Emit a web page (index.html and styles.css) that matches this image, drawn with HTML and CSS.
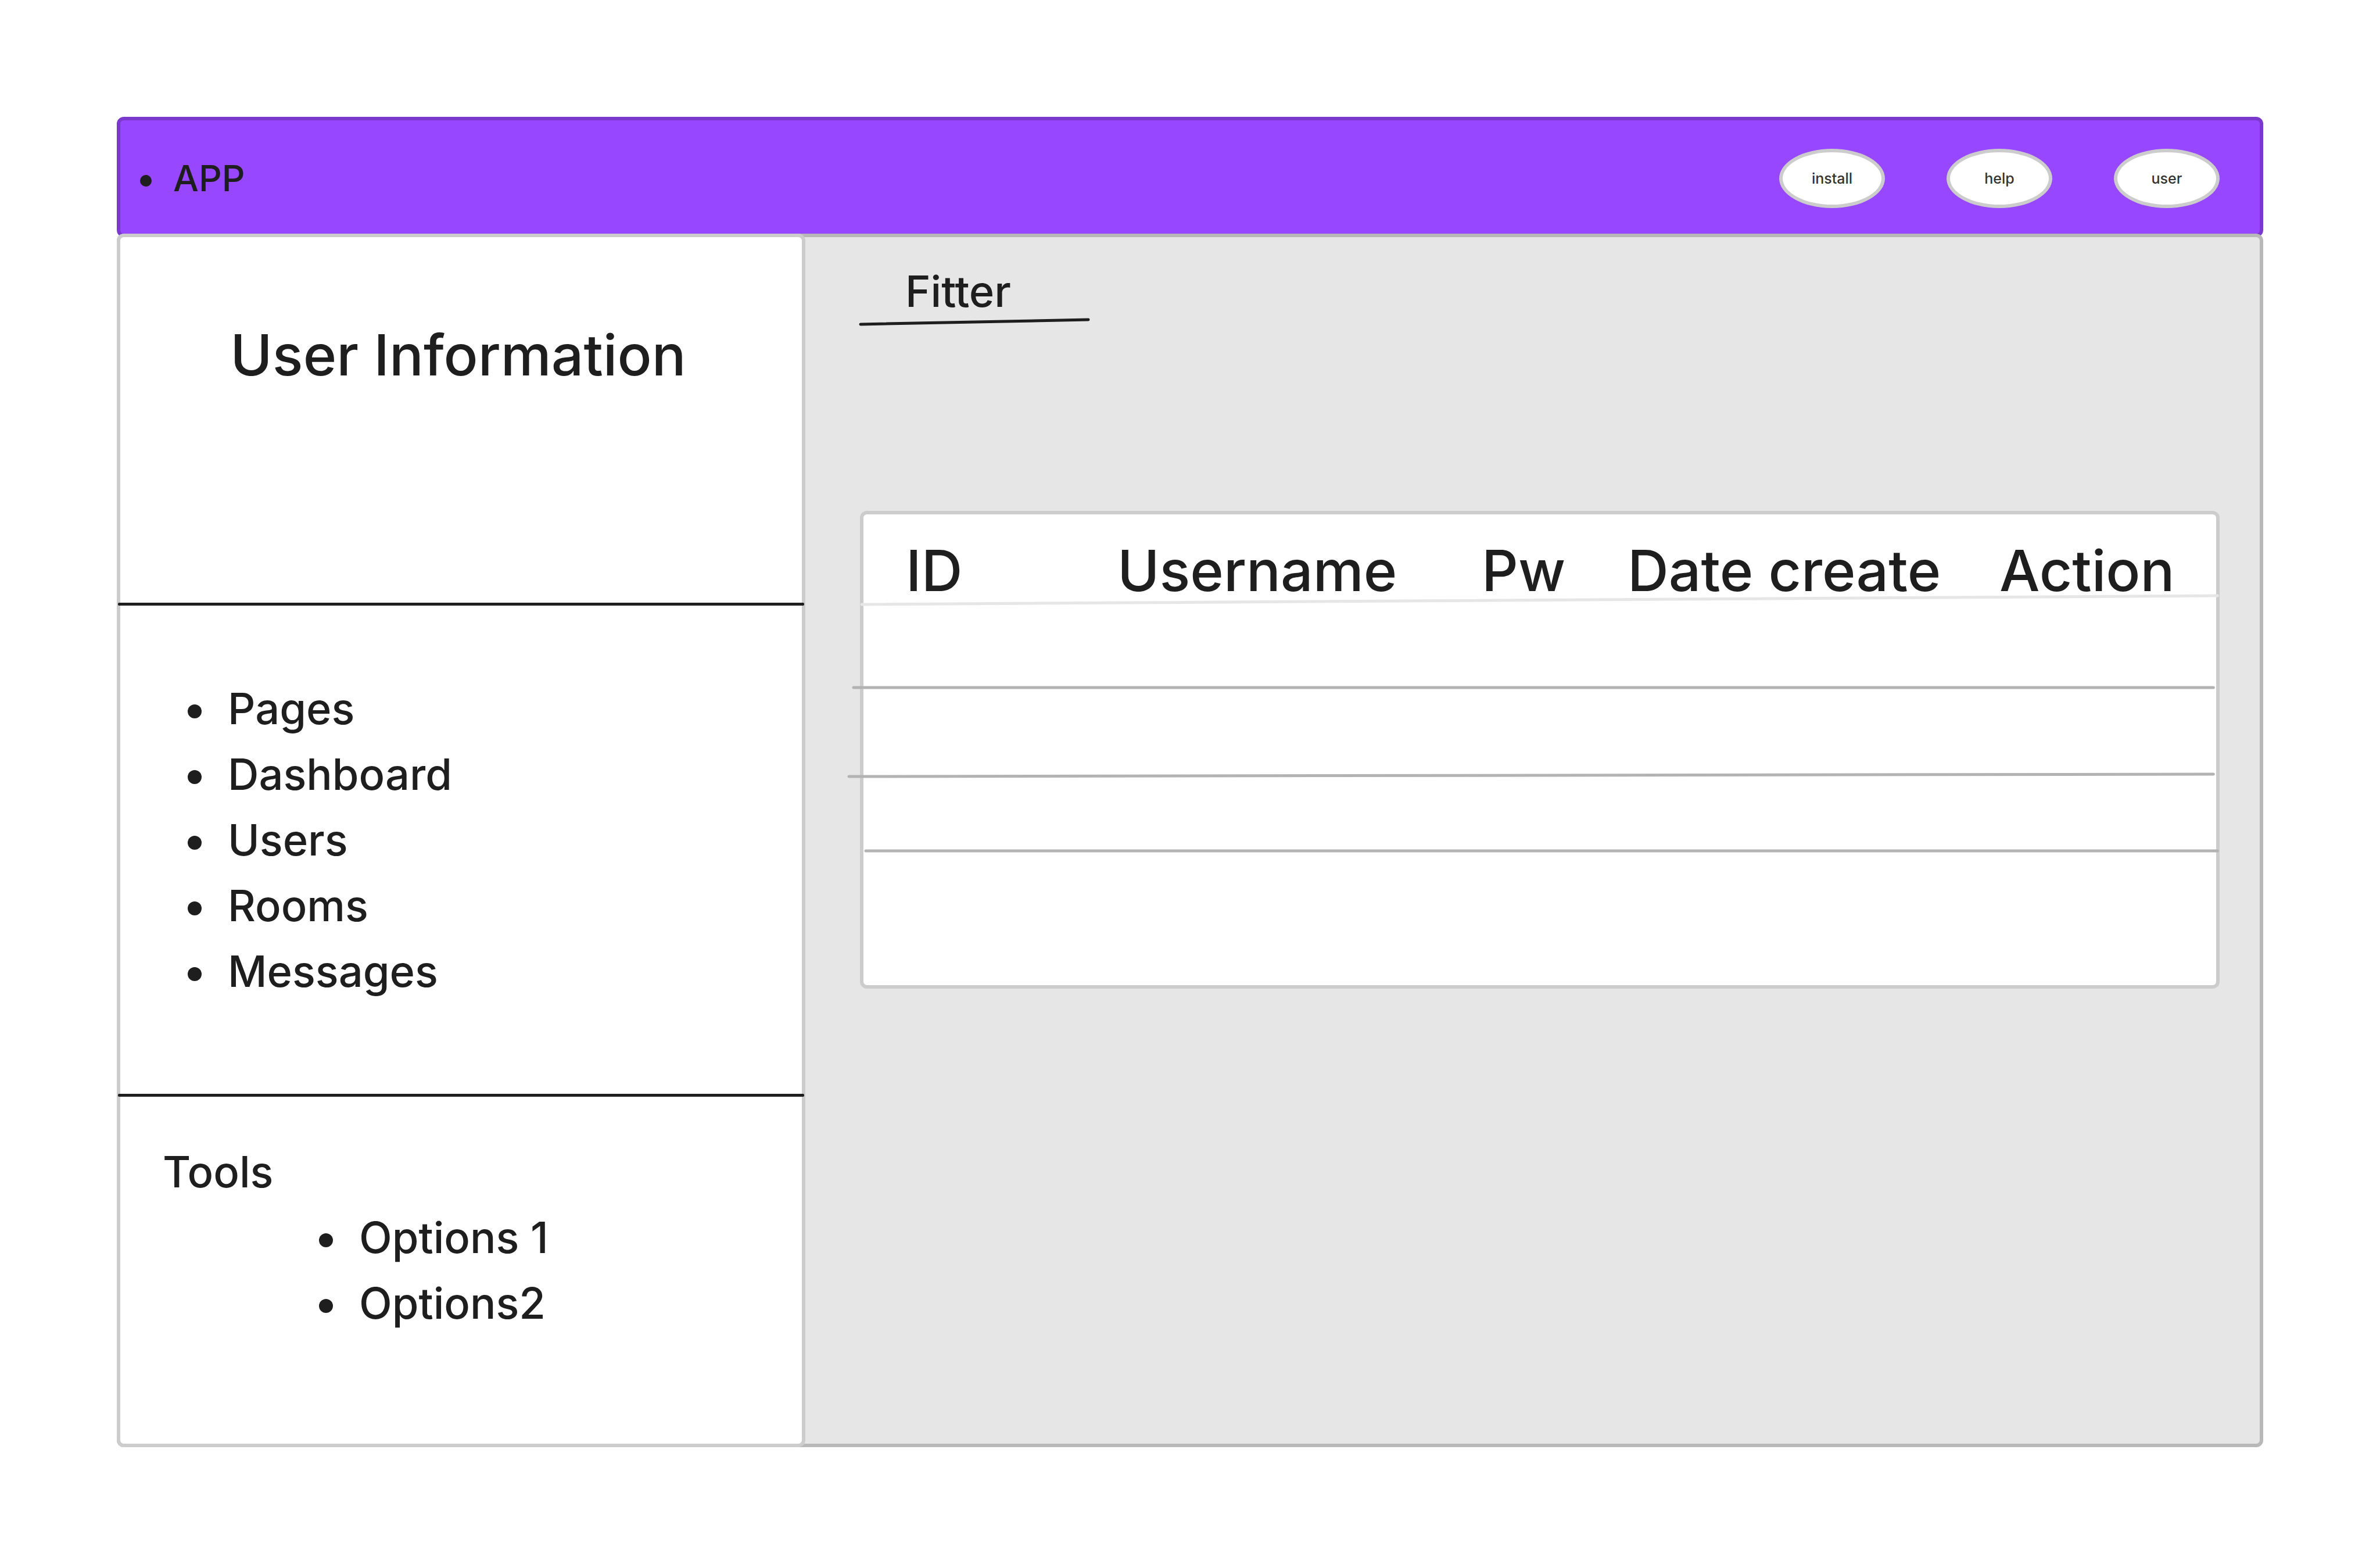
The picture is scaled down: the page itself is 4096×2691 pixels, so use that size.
FILE: index.html
```html
<!DOCTYPE html>
<html lang="en">
<head>
<meta charset="utf-8">
<title>User Information</title>
<link rel="stylesheet" href="styles.css">
</head>
<body>
<div class="page">
  <header class="topbar">
    <ul class="brand bullets">
      <li>APP</li>
    </ul>
    <div class="topbar-actions">
      <button type="button" class="pill">install</button>
      <button type="button" class="pill">help</button>
      <button type="button" class="pill">user</button>
    </div>
  </header>

  <div class="workspace">
    <aside class="sidebar">
      <section class="profile">
        <h1 class="profile-title">User Information</h1>
      </section>
      <hr class="divider">
      <nav class="pages">
        <ul class="bullets">
          <li><a href="#pages">Pages</a></li>
          <li><a href="#dashboard">Dashboard</a></li>
          <li><a href="#users">Users</a></li>
          <li><a href="#rooms">Rooms</a></li>
          <li><a href="#messages">Messages</a></li>
        </ul>
      </nav>
      <hr class="divider">
      <section class="tools">
        <h2 class="tools-title">Tools</h2>
        <ul class="bullets tools-list">
          <li><a href="#option-1">Options 1</a></li>
          <li><a href="#option-2">Options2</a></li>
        </ul>
      </section>
    </aside>

    <main class="content">
      <div class="filter">
        <h2 class="filter-title">Fitter</h2>
        <svg class="filter-line" aria-hidden="true">
          <line x1="3" y1="11" x2="395" y2="3"/>
        </svg>
      </div>
      <div class="card">
        <table class="users">
          <thead>
            <tr>
              <th scope="col" class="col-id">ID</th>
              <th scope="col" class="col-name">Username</th>
              <th scope="col" class="col-pw">Pw</th>
              <th scope="col" class="col-date">Date create</th>
              <th scope="col" class="col-action">Action</th>
            </tr>
          </thead>
          <tbody>
            <tr><td></td><td></td><td></td><td></td><td></td></tr>
            <tr><td></td><td></td><td></td><td></td><td></td></tr>
            <tr><td></td><td></td><td></td><td></td><td></td></tr>
            <tr class="last"><td></td><td></td><td></td><td></td><td></td></tr>
          </tbody>
        </table>
        <svg class="rules" aria-hidden="true">
          <line class="rule-head" x1="-3" y1="155" x2="100.1%" y2="140"/>
          <line x1="-17" y1="298" x2="99.8%" y2="298"/>
          <line x1="-25" y1="451" x2="99.8%" y2="447"/>
          <line x1="4" y1="579" x2="100.1%" y2="579"/>
        </svg>
      </div>
    </main>
  </div>
</div>
</body>
</html>
```

FILE: styles.css
```css
:root {
  --ink: #1e1e1e;
  --line: #cccccc;
  --panel: #e6e6e6;
  --panel-line: #b8b8b8;
  --rule: #b3b3b3;
  --purple: #9747ff;
  --purple-dark: #7a39cc;
  --edge: 6px;
  --radius: 12px;
}

* {
  box-sizing: border-box;
}

body {
  margin: 0;
  background: #ffffff;
  color: var(--ink);
  font-family: Inter, "Liberation Sans", sans-serif;
  font-size: 74px;
  font-weight: 500;
  line-height: 113px;
}

h1, h2, ul {
  margin: 0;
  padding: 0;
  font-size: inherit;
  font-weight: inherit;
}

a {
  color: inherit;
  text-decoration: none;
}

.page {
  display: flex;
  flex-direction: column;
  min-height: 100vh;
  padding: 201px;
}

/* Bulleted lists */
.bullets {
  list-style: none;
}

.bullets li {
  display: flex;
  align-items: center;
  gap: 45px;
}

.bullets li::before {
  content: "";
  width: 24px;
  height: 24px;
  margin-top: 8px;
  border-radius: 50%;
  background: currentColor;
}

/* Top bar */
.topbar {
  display: flex;
  align-items: center;
  justify-content: space-between;
  height: 207px;
  margin-bottom: -6px;
  padding: 4px 69px 0 34px;
  border: var(--edge) solid var(--purple-dark);
  border-radius: var(--radius);
  background: var(--purple);
}

.brand {
  font-size: 62px;
}

.brand li {
  gap: 37px;
}

.brand li::before {
  width: 20px;
  height: 20px;
}

.topbar-actions {
  display: flex;
  gap: 106px;
}

.pill {
  width: 182px;
  height: 102px;
  padding: 0;
  border: var(--edge) solid var(--line);
  border-radius: 50%;
  background: #ffffff;
  color: #333333;
  font: 500 25px/30px Inter, "Liberation Sans", sans-serif;
}

/* Workspace */
.workspace {
  display: flex;
  flex: 1;
  border: var(--edge) solid var(--panel-line);
  border-radius: var(--radius);
  background: var(--panel);
}

.sidebar {
  display: flex;
  flex-direction: column;
  width: 32%;
  min-width: 1185px;
  margin: -6px 0 -6px -6px;
  border: var(--edge) solid var(--line);
  border-radius: var(--radius);
  background: #ffffff;
}

.divider {
  width: auto;
  height: 5px;
  margin: 0 -4px;
  border: 0;
  border-radius: 2px;
  background: var(--ink);
}

.profile {
  height: 629px;
  padding: 128px 10px 0 0;
  text-align: center;
}

.profile-title {
  font-size: 98px;
  line-height: 150px;
}

.pages {
  height: 840px;
  padding: 121px 116px;
}

.tools {
  padding: 73px;
}

.tools-list {
  padding-left: 269px;
}

/* Content */
.content {
  flex: 1;
  padding: 38px 69px 0 92px;
}

.filter {
  height: 433px;
}

.filter-title {
  padding: 9px 0 0 80px;
  line-height: 92px;
}

.filter-line {
  display: block;
  width: 398px;
  height: 14px;
}

.filter-line line {
  stroke: var(--ink);
  stroke-width: 5px;
  stroke-linecap: round;
}

.card {
  position: relative;
  margin-left: 2px;
  border: var(--edge) solid var(--line);
  border-radius: var(--radius);
  background: #ffffff;
}

.users {
  width: 100%;
  border-collapse: collapse;
  table-layout: fixed;
}

.users th {
  height: 150px;
  padding: 44px 0 0;
  font-size: 98px;
  font-weight: 500;
  line-height: 106px;
  text-align: left;
  white-space: nowrap;
}

.users td {
  height: 150px;
  padding: 0;
}

.users .last td {
  height: 210px;
}

.users .col-id {
  width: 437px;
  padding-left: 73px;
}

.col-name {
  width: 627px;
}

.col-pw {
  width: 251px;
}

.col-date {
  width: 640px;
}

/* Hand-drawn row rules laid over the card */
.rules {
  position: absolute;
  inset: 0;
  width: 100%;
  height: 100%;
  overflow: visible;
  pointer-events: none;
}

.rules line {
  stroke: var(--rule);
  stroke-width: 5px;
  stroke-linecap: round;
}

.rules .rule-head {
  stroke: var(--panel);
}
```
